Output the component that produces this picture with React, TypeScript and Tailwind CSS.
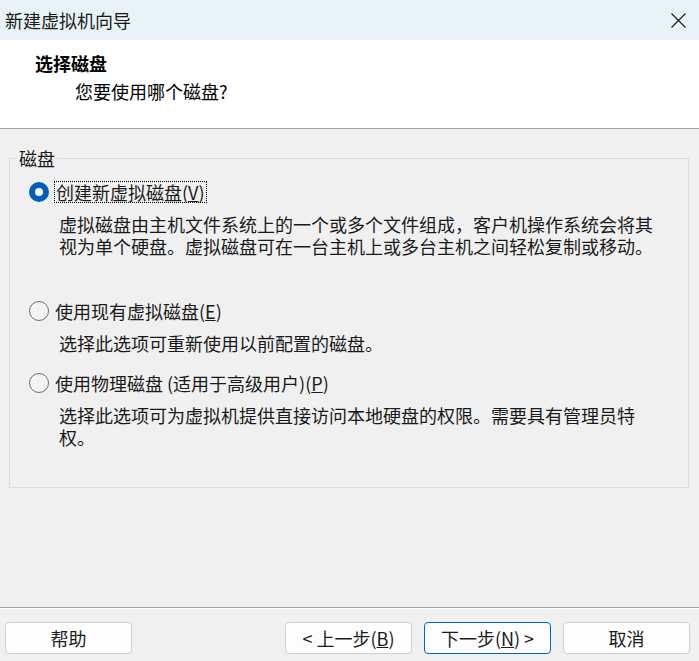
import React from 'react';

const font = { fontFamily: '"Noto Sans CJK SC", "Noto Sans", sans-serif' };

function Radio({ checked }: { checked?: boolean }) {
  if (checked) {
    return (
      <span className="flex h-[20px] w-[20px] shrink-0 items-center justify-center rounded-full bg-[#005fb8]">
        <span className="h-[8px] w-[8px] rounded-full bg-white" />
      </span>
    );
  }
  return <span className="h-[20px] w-[20px] shrink-0 rounded-full border-[1.5px] border-[#6e6e6e] bg-[#f3f3f3]" />;
}

function Button({ children, primary }: { children: React.ReactNode; primary?: boolean }) {
  return (
    <button
      className={`flex h-[32px] w-[127px] items-center justify-center rounded-[4px] border bg-[#fdfdfd] text-[18px] leading-[22px] text-[#1b1b1b] ${
        primary ? 'border-[#0067c0]' : 'border-[#d0d0d0]'
      }`}
    >
      {children}
    </button>
  );
}

function Desc({ lines }: { lines: string[] }) {
  return (
    <div className="mt-[10px] pl-[49px]">
      {lines.map((l) => (
        <div key={l} className="h-[22px] text-[18px] leading-[22px]">
          {l}
        </div>
      ))}
    </div>
  );
}

export default function App() {
  return (
    <div className="flex h-[661px] w-[699px] flex-col overflow-hidden bg-[#f0f0f0] text-[#1a1a1a]" style={font}>
      {/* Title bar */}
      <div className="flex h-[40px] shrink-0 items-center justify-between bg-[#e8f3f7] pl-[5px] pr-[12px]">
        <span className="text-[18px] leading-[22px] text-[#1a1a1a]">新建虚拟机向导</span>
        <svg width="15" height="15" viewBox="0 0 15 15" className="mr-[1px]">
          <path d="M0.5 0.5 L14.5 14.5 M14.5 0.5 L0.5 14.5" stroke="#1a1a1a" strokeWidth="1.2" />
        </svg>
      </div>

      {/* Header */}
      <div className="h-[89px] shrink-0 border-b border-[#a0a0a0] bg-white pt-[12px]">
        <div className="pl-[35px] text-[18px] font-bold leading-[22px] text-black">选择磁盘</div>
        <div className="mt-[6px] pl-[75px] text-[18px] leading-[22px] text-black">您要使用哪个磁盘?</div>
      </div>

      {/* Body */}
      <div className="flex-1 pt-[18px]">
        <fieldset className="ml-[9px] h-[341px] w-[680px] border border-[#dcdcdc] p-0">
          <legend className="ml-[7px] px-[2px] text-[18px] leading-[22px]">磁盘</legend>

          <div className="mt-[12px] flex items-center pl-[19px]">
            <Radio checked />
            <span className="ml-[5px] border border-dotted border-black px-[1px] text-[18px] leading-[20px]">
              创建新虚拟磁盘(<span className="underline">V</span>)
            </span>
          </div>
          <Desc
            lines={[
              '虚拟磁盘由主机文件系统上的一个或多个文件组成，客户机操作系统会将其',
              '视为单个硬盘。虚拟磁盘可在一台主机上或多台主机之间轻松复制或移动。',
            ]}
          />

          <div className="mt-[43px] flex items-center pl-[19px]">
            <Radio />
            <span className="ml-[6px] text-[18px] leading-[22px]">
              使用现有虚拟磁盘(<span className="underline">E</span>)
            </span>
          </div>
          <Desc lines={['选择此选项可重新使用以前配置的磁盘。']} />

          <div className="mt-[18px] flex items-center pl-[19px]">
            <Radio />
            <span className="ml-[6px] text-[18px] leading-[22px]">
              使用物理磁盘 (适用于高级用户)(<span className="underline">P</span>)
            </span>
          </div>
          <Desc lines={['选择此选项可为虚拟机提供直接访问本地硬盘的权限。需要具有管理员特', '权。']} />
        </fieldset>
      </div>

      {/* Footer */}
      <div className="h-[54px] shrink-0 border-t border-[#a0a0a0]">
        <div className="h-full border-t border-white">
          <div className="flex items-center pl-[5px] pr-[9px] pt-[13px]">
            <Button>帮助</Button>
            <div className="ml-auto flex gap-[12px]">
              <Button>
                &lt; 上一步(<span className="underline">B</span>)
              </Button>
              <Button primary>
                下一步(<span className="underline">N</span>) &gt;
              </Button>
              <Button>取消</Button>
            </div>
          </div>
        </div>
      </div>
    </div>
  );
}
